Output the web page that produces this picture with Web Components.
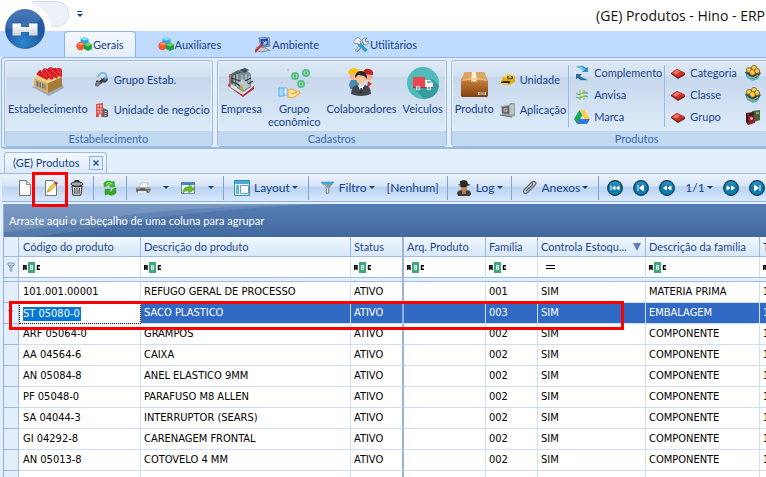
<!DOCTYPE html>
<html lang="pt-BR">
<head>
<meta charset="utf-8">
<title>(GE) Produtos - Hino - ERP</title>
<style>
html, body { margin: 0; height: 100%; }
body { overflow: hidden; background: #e3efff; color: #15428b; font: 11px/14px Lato, "Noto Sans", sans-serif; }
</style>
</head>
<body>
<erp-window></erp-window>

<script>
const ICONS = {
logo: ['0 0 54 54', `<defs><radialGradient id="g" cx=".45" cy=".85" r=".9"><stop offset="0" stop-color="#2f86cf"/><stop offset=".6" stop-color="#1d559f"/><stop offset="1" stop-color="#2e69b4"/></radialGradient><linearGradient id="h" x1="0" y1="0" x2="0" y2="1"><stop offset="0" stop-color="#fff"/><stop offset="1" stop-color="#cfd3d8"/></linearGradient></defs><circle cx="27" cy="27" r="26" fill="#fff"/><path d="M0 29h54a27 27 0 0 1-54 0z" fill="#bfdbff"/><circle cx="27" cy="27" r="19.5" fill="url(#g)" stroke="#173f80" stroke-width=".6"/><path d="M10 14q17-13 34 0-4 12-38 13 0-8 4-13z" fill="#fff" opacity=".13"/><path d="M14.5 21.5h8.5v3.500h8v-3.500h8.500v12h-8.500v-3.500h-8v3.500h-8.500z" fill="url(#h)"/>`],
cubes: ['0 0 16 16', `<path d="M8.300 0 12.500 2v4.500L8.500 8.500 4.500 6.500V2z" fill="#27aee6"/><path d="M4.500 2 8.500 3.500 12.500 2 8.300 0z" fill="#8ddcf8"/><circle cx="4.500" cy="9" r="4.200" fill="#f0592a"/><path d="M1.500 7 4.500 5.500 8 7 4.500 8.500z" fill="#ff9d78"/><path d="M12.200 5.500 16 7.500v4.500l-4 2-4-2V7.500z" fill="#21a043"/><path d="m8 7.500 4-2 4 2-4 2z" fill="#6fd06a"/>`],
ambient: ['0 0 16 16', `<path d="M4 1 14 0l1 9-9 1z" fill="#d9dce3" stroke="#444c60" stroke-width=".7"/><path d="m5.200 2 7.800-.8.700 7-7.500.700z" fill="#1950bd"/><path d="m8 4 3 3m0-3v3H8" stroke="#fff" fill="none"/><path d="m2 10 7 .500 6 3-9 1.500L0 13z" fill="#c6c8cf" stroke="#585d69" stroke-width=".6"/><path d="m7 7-7 8" stroke="#ca3034" stroke-width="2"/>`],
tools: ['0 0 16 16', `<path d="M3 14.500 12.500 4" stroke="#5d7f9b" stroke-width="3.200"/><path d="M3 14 12 4.500" stroke="#dce9f3" stroke-width="1.600"/><path d="M9 3q2-3 5-2l-2 2 1 2 3-1q0 4-5 4z" fill="#dce6ed" stroke="#5d7183" stroke-width=".7"/><path d="m5.500 6.500 8 7.500" stroke="#27a0cf" stroke-width="3.300"/><path d="M0 4.500 4.500 0 9 3.500 7 4.500 8 6 6 8 4.500 6 2 7z" fill="#e6edf2" stroke="#687b89" stroke-width=".7"/>`],
store: ['0 0 32 32', `<path d="m0 20 17 9 15-8-3-8z" fill="#8a96a0" opacity=".7"/><path d="m2 11 14 5v10L2 19z" fill="#d8ae68"/><path d="m16 16 14-6v9l-14 7z" fill="#a67b34"/><path d="M2 11 8 8l20-2 2 4-14 6z" fill="#f1cd86"/><path d="m4.500 14 9 3.500v5L4.500 19z" fill="#64716b"/><path d="m7 15v5m2.500-4v5m2.500-4v5" stroke="#e2c899" stroke-width=".8"/><path d="M5 8q-1-2 3-5l2 1 2-3 3 1 3-2 3 1 6 0q3 0 3 3v6l-4-1-1 3-3-2-2 3-3-2-2 2-4-2-2-1z" fill="#d81f26"/><path d="m9 4 6 6m-2-8 7 8m-2-9 8 8M24 1l5 6" stroke="#f2605a" stroke-width=".8"/>`],
group: ['0 0 16 16', `<path d="m2 9 5-3 4 2-4 4-4 2z" fill="#303236"/><path d="m1 11 4-2 2 2-3 4-3-1z" fill="#777a80"/><path d="m9 6 4-1 1 3-3 3-3-1z" fill="#404349"/><path d="m3 8 3-2 2 1-3 2z" fill="#d6d7d9"/><path d="M4 5q2-5 6-4 3 1 2 5" fill="none" stroke="#7db5dd" stroke-width="1.800"/><path d="m10 6 3 0-2 3z" fill="#53a0d9"/>`],
building: ['0 0 16 16', `<path d="M2 2 9 1v14H2z" fill="#e84c45"/><path d="M9 6 14 8v7H9z" fill="#59606b"/><path d="M3.500 4h1.500m1 0h1.500m-4 3h1.500m1 0h1.500m-4 3h1.500m1 0h1.500" stroke="#fff" stroke-width="1.600"/><path d="M5 12h2v3H5z" fill="#fff"/><path d="M10.500 9.500h2m-2 2h2m-2 2h2" stroke="#c8cdd4"/>`],
company: ['0 0 32 32', `<path d="m3 19 15 11 11-8v-3L17 23 4 16z" fill="#b3303c"/><path d="m5 15 13 8 10-6v3l-10 8-13-8z" fill="#d7dfdf"/><path d="M6 7 13 3l6 3v17L6 17z" fill="#53656b"/><path d="m12 8 9-5 5 4v13l-8 5-6-4z" fill="#7b8c92"/><path d="m14 3 6-2 4 2-5 3z" fill="#3c5259"/><path d="M9 8v10m3-11v13m5-12v14m4-15v14m3-12v10" stroke="#d0dada"/><path d="m6 11 12 4 8-4M6 14l12 6 10-6" stroke="#263c46" stroke-width="1.100" fill="none"/><path d="m13 16 5-4 7 7-6 4z" fill="#bdcaca"/><path d="m15 18 3 2v4l-3-2z" fill="#c4a430"/><path d="M5 7v12" stroke="#b2484d" stroke-width="1.500"/>`],
money: ['0 0 32 32', `<g fill="#4dbf93"><circle cx="28" cy="6" r="4"/><circle cx="17" cy="9" r="4"/><circle cx="23" cy="17" r="4"/></g><g fill="#aee68b"><circle cx="28" cy="6" r="2.300"/><circle cx="17" cy="9" r="2.300"/><circle cx="23" cy="17" r="2.300"/></g><path d="M28 4.500v3m-11 0v3m6 5v3" stroke="#268767" stroke-width="1.200"/><path d="M1 21h5v8H1z" fill="#a8dcff" stroke="#55aef2"/><path d="M6 21h3v7H6z" fill="#fff" stroke="#5caee9"/><path d="m10 23 4-1 4 2-1 2-4 0 2 1 6-3 1 2-7 5-5-1z" fill="#ffe5a1" stroke="#e7a840" stroke-width="1.100"/><path d="M9 3h2m-1-1v2m-7 12h2m24 0h2M8 16h1" stroke="#f2aaa6"/>`],
people: ['0 0 32 32', `<circle cx="8" cy="9" r="4.500" fill="#f2b58d"/><path d="M2 7q0-6 6-6t7 6z" fill="#ffc113"/><path d="m3 17 2-4 8 0v9H4z" fill="#4a8bad"/><circle cx="22" cy="9" r="4.500" fill="#e9ad87"/><path d="M17 7q0-6 6-5 5 1 4 6z" fill="#c52227"/><path d="m17 14 9-1 4 5-2 6H17z" fill="#d6dbe1"/><path d="m22 14 4 3-5 4" fill="#cb3b3a"/><circle cx="15" cy="12" r="4.800" fill="#f7c29a"/><path d="M9 11q0-7 6-7t6 8l-3-3-6-1z" fill="#2c2928"/><path d="M5 27q0-8 6-9l4 4 4-4q6 1 6 9-10 4-20 0z" fill="#41464e"/><path d="m12 18 3 8 3-8-3 2z" fill="#fff"/><path d="m14.500 21h1.500v5h-2z" fill="#222"/>`],
truck: ['0 0 32 32', `<circle cx="16" cy="16" r="16" fill="#4fbcba"/><path d="m7 21 10 11q14-1 15-14l-7-6z" fill="#349da2"/><path d="M6 10h12v10H6z" fill="#ef4550"/><path d="M18 13h5l3 3v4h-8z" fill="#f3f5f5"/><path d="m20 14h3l2 2h-5z" fill="#68bdc9"/><path d="M6 20h20v1H6z" fill="#9b3b45"/><circle cx="11" cy="21" r="2.200" fill="#fff"/><circle cx="22" cy="21" r="2.200" fill="#fff"/><circle cx="11" cy="21" r="1" fill="#35656a"/><circle cx="22" cy="21" r="1" fill="#35656a"/>`],
box: ['0 0 32 32', `<defs><linearGradient id="b" x1="0" y1="0" x2="0" y2="1"><stop offset="0" stop-color="#c98a4a"/><stop offset=".4" stop-color="#bd7834"/><stop offset="1" stop-color="#804010"/></linearGradient></defs><path d="M7 5h19l4 9v15l-1 1H4l-1-1V13z" fill="url(#b)"/><path d="M7 5h19l4 9q-12-4-27 0z" fill="#dba663"/><path d="M14 5h4l1 10-2-1-1 1-2-1-1 1z" fill="#fff0d3"/><path d="M16 11q9 0 14 3-12-2-27 0 6-3 13-3z" fill="#f6c481" opacity=".75"/><path d="M20 25h8v3h-8z" fill="#e5d5bd"/><path d="M22 25v3m2-3v3m2-3v3" stroke="#6f462b"/>`],
tape: ['0 0 16 16', `<path d="M1 10 3 5l6-3 6 2v6l-5 3-9-1z" fill="#e7ac0c"/><path d="M3 5 9 2l6 2-4 4z" fill="#ffd63e"/><path d="m1 10 3-1 6 0v2l-4 1-5 0z" fill="#292722"/><ellipse cx="10" cy="5.500" rx="3.200" ry="1.800" fill="#33312c"/><ellipse cx="10" cy="5.300" rx="1.700" ry="1" fill="#f9e17c"/><path d="M0 11h8v1H0z" fill="#ffd21e"/>`],
safe: ['0 0 16 16', `<path d="m1 4 8-1 1-2h4l1 1v12l-5 1-8-2z" fill="#9b9e9f"/><path d="M2 5 9 4v8l-7-1z" fill="#61686a"/><path d="m10 3 4-1v10l-4 1z" fill="#bfc1c1"/><circle cx="5.500" cy="8" r="2.200" fill="#a9acac"/><path d="m4.500 9 2-2" stroke="#dd3935"/><path d="M0 13l12 2" stroke="#676b6d"/>`],
swap: ['0 0 16 16', `<path d="M2 2q6-3 10 1l2-1v5H8l2-2Q7 3 2 2z" fill="#2c91ba"/><path d="M14 14q-7 3-10-1l-2 1V9h6l-2 2q3 3 8 3z" fill="#236f96"/><path d="M2 2q6-2 9 2L9 6Q7 3 2 2z" fill="#6cc7e1"/><path d="M5 15.500h9" stroke="#b6c8d4"/>`],
anvisa: ['0 0 16 16', `<path d="M2 6.500q3 2 6 0t6 0M2 10q3 2 6 0t6 0" fill="none" stroke="#48b4a5" stroke-width="1.300"/><path d="M6 3v3l4 4v3M10 3v3l-4 4v3" fill="none" stroke="#b6c33b" stroke-width="1.200"/><circle cx="8" cy="8" r="1.300" fill="#f6f091"/>`],
drive: ['0 0 16 16', `<path d="M5.500 1 0 10l3 5 5.500-9z" fill="#18a560"/><path d="M5.500 1h5l5.500 9h-5.500z" fill="#ffcf42"/><path d="M5.500 10H16l-3 5H3z" fill="#3676d6"/>`],
red: ['0 0 16 16', `<path d="m1 8 6-4 8 4v2l-7 4-7-5z" fill="#812319"/><path d="m1 8 6-4 8 4-7 4z" fill="#ce352b"/><path d="m3 8 4-3 3 1.500-4 3z" fill="#ee7a69"/>`],
eggs: ['0 0 16 16', `<path d="M0 7 3 6h10l3 2-3 5-5 2-6-3z" fill="#354b60"/><path d="m1 8 4 4 6 1 4-4-2 5-5 2-6-3z" fill="#4eb2d5"/><g fill="#f8cb43" stroke="#6b4510" stroke-width=".7"><circle cx="4" cy="5" r="2.600"/><circle cx="9" cy="3" r="2.600"/><circle cx="12" cy="6" r="2.600"/><circle cx="7.500" cy="7.500" r="2.800"/></g><path d="m3 4 1-1m4-1h1m-3 4h1m4-2h1" stroke="#fff4ad"/><path d="m3 11 5 2 5-3" stroke="#dba927" fill="none"/>`],
books: ['0 0 16 16', `<path d="m7 2 8-1v10l-6 2z" fill="#49633b"/><path d="m1 4 8-1 1 11-7 2z" fill="#8c2027"/><path d="M1 4v9l2 3V6z" fill="#461518"/><path d="M4 4 9 3v3L4 7z" fill="#2a2528"/><circle cx="6.500" cy="9.500" r="1.500" fill="#e8b3a3"/><path d="M11 4h3" stroke="#d8cdb9"/>`],
page: ['0 0 16 16', `<path d="M2.500.5h7l4 4v11h-11z" fill="#fbfbfc" stroke="#777"/><path d="M9.500.5v4h4" fill="#e3e4e5" stroke="#888"/>`],
edit: ['0 0 16 16', `<path d="M2.500.5h8l3 3v12h-11z" fill="#fbfbfc" stroke="#777"/><path d="m4.500 12 1-3 6-6.500 2 2-6.500 6.500z" fill="#f8cc28" stroke="#bd951b" stroke-width=".6"/><path d="m4 12.500 1-3 2 2z" fill="#ed944d"/><path d="m11 3 2-1.500 2 2-2 1.500z" fill="#b71d72"/>`],
trash: ['0 0 16 16', `<path d="M5.500 2q2.500-3 5 0" fill="none" stroke="#222" stroke-width="1.400"/><ellipse cx="8" cy="4" rx="6" ry="2.200" fill="#aaa" stroke="#222"/><path d="m3 6 1 9q4 1.500 8 0l1-9q-5 2-10 0z" fill="#ddd" stroke="#333"/><path d="m5.500 8 .5 6m2-6v6m2.500-6-.5 6" stroke="#444" stroke-width="1.100"/>`],
refresh: ['0 0 16 16', `<path d="M2 7V3q4-4 8-1l2-1 1 6H7l2-2Q6 3 5 6z" fill="#3fba25" stroke="#238414" stroke-width=".4"/><path d="M14 8v5q-4 4-8 1l-3 1V9h6l-2 2q3 2 4-2z" fill="#35a91e" stroke="#238414" stroke-width=".4"/><path d="M4 4q3-3 6 0" stroke="#a4ed7f" fill="none"/>`],
printer: ['0 0 16 16', `<path d="m6 3 7 0-1 6H4z" fill="#fafafa" stroke="#aaa" stroke-width=".6"/><path d="m1 8 2-1h11l2 2-2 4-11 0-2-2z" fill="#686b70"/><path d="m1 8 2-1h11l2 2H2z" fill="#a7aaac"/><path d="m3 11 8 0 1 2H3z" fill="#e9e7de"/><path d="M5 9h5" stroke="#333"/><path d="M13 11h1" stroke="#b5d443"/>`],
exporter: ['0 0 16 16', `<path d="M1.500 2.500h13v11h-13z" fill="#fff" stroke="#6b8caf"/><path d="M1 2h14v3H1z" fill="#4985b8"/><path d="M3 13q0-7 6-6V5l6 4-6 4v-2q-4-1-6 2z" fill="#67bb2c" stroke="#348b17" stroke-width=".6"/>`],
layout: ['0 0 16 16', `<path d="M.5.500h15v15H.5z" fill="#e9f8ff" stroke="#298fb6"/><path d="M1 1h14v3H1z" fill="#4da8cc"/><path d="M2 5h3v9H2z" fill="#65b7d4"/><path d="M6.500 5.500h8v8h-8z" fill="#f8fcff" stroke="#7699b9"/>`],
filter: ['0 0 16 16', `<path d="m2 2 5 6v6l3-1V8l5-6z" fill="#969ba1" stroke="#777" stroke-width=".5"/><path d="M2 2h13l-2 2H4z" fill="#31abe0"/><path d="m5 5 3.500 4v4" stroke="#e5e7e9" fill="none"/>`],
spy: ['0 0 16 16', `<path d="M1 13q1-3 5-3h4q5 0 5 4l-1 2H2z" fill="#3b3d42"/><path d="M5 5h6v5l-3 3-3-3z" fill="#c6835b"/><path d="m4 1 4-1 3 1 1 3 3 1q-7 2-13 0l2-1z" fill="#28292b"/><path d="M4 6h7v1H4z" fill="#111"/><path d="m6 10 2 3 2-3 0 4H6z" fill="#b87534"/>`],
clip: ['0 0 16 16', `<path d="m3 9 7-7q2-1.500 3 0 2 1 0 3l-8 8q-1.500 1-3 0-1-2 0-3l7-7q1-.5 1.500.5T10 5l-6 6" fill="none" stroke="#686b72" stroke-width="1.400"/>`],
first: ['0 0 16 16', `<path d="M4 5.500v5M8 6 5.500 8 8 10zM12 6 9.500 8l2.500 2z" fill="#fff" stroke="#fff"/>`],
prev: ['0 0 16 16', `<path d="M5 5v6M10.500 5.200 6.500 8l4 2.800z" fill="#fff" stroke="#fff"/>`],
rewind: ['0 0 16 16', `<path d="M7.500 6 4.500 8l3 2zM12 6 9 8l3 2z" fill="#fff" stroke="#fff"/>`],
forward: ['0 0 16 16', `<path d="M8.500 6l3 2-3 2zM4 6l3 2-3 2z" fill="#fff" stroke="#fff"/>`],
next: ['0 0 16 16', `<path d="M11 5v6M5.500 5.200l4 2.800-4 2.800z" fill="#fff" stroke="#fff"/>`],
funnel: ['0 0 16 16', `<path d="M4.500 3.500h7v2L9 8.500v4H7v-4L4.500 5.500zM5 6h6M6 8h4" fill="none" stroke="#6389bd"/>`],
edrow: ['0 0 16 16', `<path d="M5 6q1-3 3-2t1 3L6 11m0 2h3" fill="none" stroke="#35588d"/>`],
abc: ['0 0 18 11', `<path d="M5 0h7v11H5z" fill="#3fa77c"/><path d="M.7 8V3.700h2.300V8M1 6h2M17 3.700h-2.500v3.600H17" fill="none" stroke="#000" stroke-width="1.400"/><path d="M7.500 3.500h2v4h-2zM7.500 5.500h2" fill="none" stroke="#e8fff4"/>`],
close: ['0 0 14 14', `<path d="M.5.500h13v13H.5z" fill="#dfecfc" stroke="#8db2e3"/><path d="m4.500 4.500 5 5m0-5-5 5" stroke="#24569f" stroke-width="1.500"/>`]
};
for (const n of ['first','prev','rewind','forward','next'])
  ICONS[n][1] = `<defs><linearGradient id="n" x1="0" y1="0" x2="0" y2="1"><stop offset="0" stop-color="#2f9cc8"/><stop offset=".5" stop-color="#0d74aa"/><stop offset="1" stop-color="#1185b6"/></linearGradient></defs><circle cx="8" cy="8" r="7.400" fill="url(#n)" stroke="#0c3550" stroke-width="1.100"/>` + ICONS[n][1];

function define(name, css, html) {
  customElements.define(name, class extends HTMLElement {
    connectedCallback() {
      if (this.shadowRoot) return;
      const root = this.attachShadow({ mode: 'open' });
      root.innerHTML = `<style>*{box-sizing:border-box}${css}</style>` + (typeof html === 'function' ? html(this) : html);
    }
  });
}
const attr = (el, n, d = '') => el.getAttribute(n) ?? d;

define('app-icon', `:host{display:block;flex:none;width:var(--icon-w,16px);height:var(--icon-h,16px)} svg{display:block;width:100%;height:100%}`,
  el => { const [box, body] = ICONS[attr(el, 'name')]; return `<svg viewBox="${box}" aria-hidden="true">${body}</svg>`; });

define('title-bar', `
  :host{display:flex;align-items:center;height:31px;background:#fff;position:relative;color:#111}
  .quick{width:37px;height:26px;margin:-4px 0 0 32px;border:1px solid #d3deed;border-left:0;border-radius:0 14px 14px 0;background:#edf2fa}
  button{all:unset;width:5px;height:5px;margin:-3px 0 0 8px;border-top:1px solid #15428b;display:flex;align-items:flex-end;justify-content:center}
  i{border:3px solid transparent;border-top-color:#15428b;border-bottom:0}
  h1{margin:0 1px 0 auto;font:14px/20px "Open Sans","Noto Sans",sans-serif;white-space:nowrap}
  app-icon{position:absolute;left:-2px;top:2px;z-index:2;--icon-w:54px;--icon-h:54px}`,
  `<app-icon name="logo"></app-icon><div class="quick"></div><button aria-label="Personalizar"><i></i></button><h1><slot></slot></h1>`);

define('ribbon-tab', `
  :host{display:flex}
  button{all:unset;box-sizing:border-box;display:flex;align-items:center;gap:1px;height:27px;padding:0 12px;white-space:nowrap}
  :host([active]) button{background:linear-gradient(#f4f8fd,#e4edf8);border:1px solid #8db2e3;border-bottom:0;border-radius:4px 4px 0 0;padding:0 11px}`,
  el => `<button role="tab" aria-selected="${el.hasAttribute('active')}"><app-icon name="${attr(el,'icon')}"></app-icon><slot></slot></button>`);

define('ribbon-tabs', `:host{display:flex;height:26px;padding-left:64px;background:#bfdbff} div{display:flex;gap:10px}`, `<div role="tablist"><slot></slot></div>`);

define('ribbon-body', `:host{display:flex;gap:4px;padding:2px 0 0 2px;margin:0 0 0 1px;border:1px solid #8db2e3;border-right:0;border-bottom:2px solid #9bb8de;border-radius:4px 0 0 4px;background:linear-gradient(#e4edf8,#e6f1fb);overflow:hidden}`, `<slot></slot>`);

define('ribbon-group', `
  :host{display:flex;flex:none;flex-direction:column;height:87px;border:1px solid #9bbbe0;border-radius:3px;background:linear-gradient(#dde9f5 0,#d3e1f1 15px,#c7d8ed 16px,#dcebf8 70px);overflow:hidden;box-shadow:inset 0 0 0 1px #e9f2fb}
  .items{flex:1;display:flex;min-height:0}
  .cap{height:15px;line-height:15px;text-align:center;background:#c1d8f1;color:#3e6aaa}`,
  el => `<div class="items"><slot></slot></div><div class="cap">${attr(el,'label')}</div>`);

define('ribbon-column', `:host{display:flex;flex-direction:column;justify-content:center;padding:0 2px 2px 3px;gap:14px} :host([three]){justify-content:center;gap:6px;border-left:1px solid #9bbbe0;margin:4px 0;padding:0 2px 2px 5px} :host([plain]){border-left-color:transparent}`, `<slot></slot>`);

define('ribbon-item', `
  :host{display:block}
  button{all:unset;display:flex;align-items:center;gap:4px;height:16px;white-space:nowrap}
  :host([large]) button{flex-direction:column;gap:3px;height:auto;padding:6px 3px 0;text-align:center;line-height:13px}
  :host([large]) app-icon{--icon-w:32px;--icon-h:32px}`,
  el => `<button aria-label="${attr(el,'aria', el.textContent.trim())}"><app-icon name="${attr(el,'icon')}"></app-icon><span><slot></slot></span></button>`);

define('doc-tab', `
  :host{display:flex;padding:4px 0 0 4px;border-bottom:1px solid #9dbbe4;height:25px;align-items:flex-end;background:#e3efff;box-sizing:border-box}
  div{display:flex;align-items:center;gap:9px;height:21px;padding:0 3px 0 8px;border:1px solid #9dbbe4;border-bottom:0;border-radius:3px 3px 0 0;background:linear-gradient(#f4f9ff,#dce9fa)}
  button{all:unset} app-icon{--icon-w:14px;--icon-h:14px}`,
  `<div><span><slot></slot></span><button aria-label="Fechar"><app-icon name="close"></app-icon></button></div>`);

define('tool-bar', `
  :host{display:flex;align-items:center;box-sizing:border-box;height:28px;margin-left:2px;padding-left:5px;border-bottom:1px solid #8db2e3;background:linear-gradient(#edf3fa 0,#d5e4f6 12px,#b9d3f2 13px,#d8e8fb 100%)}
  .grip{width:2px;height:14px;margin-right:5px;background:repeating-linear-gradient(#7f9fce 0 2px,transparent 2px 4px)}`, `<div class="grip"></div><slot></slot>`);

define('tool-sep', `:host{display:block;flex:none;width:1px;height:24px;margin:0 3px;background:#7fa3d4}`, ``);

define('tool-button', `
  :host{display:block;position:relative;flex:none}
  button{all:unset;display:flex;align-items:center;gap:4px;height:24px;padding:0 5px;font-size:12px;white-space:nowrap}
  :host([wide]) button{padding:0 7px}
  :host([drop]) button::after{content:"";border:3px solid transparent;border-top-color:#15428b;border-bottom:0;margin-left:-2px}
  :host([drop][bare]) button{padding:0 6px 0 9px}
  :host([marked])::after{content:"";position:absolute;left:-6px;top:-4px;width:36px;height:35px;box-sizing:border-box;border:3px solid #f00;z-index:3}`,
  el => `<button aria-label="${attr(el,'aria', el.textContent.trim())}">${attr(el,'icon') ? `<app-icon name="${attr(el,'icon')}"></app-icon>` : ''}${el.textContent.trim() ? '<span><slot></slot></span>' : ''}</button>`);

define('group-panel', `
  :host{display:grid;align-items:center;height:33px;color:#fff}
  svg,span{grid-area:1/1} svg{width:100%;height:33px} span{padding-left:5px}`,
  `<svg viewBox="0 0 762 33" preserveAspectRatio="none" aria-hidden="true"><defs><linearGradient id="p" x1="0" y1="0" x2="0" y2="1"><stop offset="0" stop-color="#557db4"/><stop offset="1" stop-color="#426a9f"/></linearGradient></defs><path d="M0 0h762v33H0z" fill="url(#p)"/><path d="M0 0h325Q200 5 125 18T30 33H0z" fill="#fff" opacity=".1"/><path d="M0 0h325Q180 2 95 15T0 28z" fill="#fff" opacity=".13"/></svg><span><slot></slot></span>`);

const COLS = [['Código do produto',122],['Descrição do produto',210],['Status',53],['Arq. Produto',82],['Família',52],['Controla Estoqu...',108],['Descrição da família',114],['Tipo',60]];
const ROWS = [
  ['101.001.00001','REFUGO GERAL DE PROCESSO','001','MATERIA PRIMA'],
  ['ST 05080-0','SACO PLASTICO','003','EMBALAGEM'],
  ['ARF 05064-0','GRAMPOS','002','COMPONENTE'],
  ['AA 04564-6','CAIXA','002','COMPONENTE'],
  ['AN 05084-8','ANEL ELASTICO 9MM','002','COMPONENTE'],
  ['PF 05048-0','PARAFUSO M8 ALLEN','002','COMPONENTE'],
  ['SA 04044-3','INTERRUPTOR (SEARS)','002','COMPONENTE'],
  ['GI 04292-8','CARENAGEM FRONTAL','002','COMPONENTE'],
  ['AN 05013-8','COTOVELO 4 MM','002','COMPONENTE'],
  ['','','','']
];
define('product-grid', `
  :host{display:block;color:#000;background:#fff}
  table{table-layout:fixed;width:816px;min-width:100%;border-spacing:0}
  th,td{padding:0 0 0 3px;height:21px;border-right:1px solid #cfe0f5;border-bottom:1px solid #cfe0f5;text-align:left;white-space:nowrap;overflow:hidden}
  tbody td{font-family:"DejaVu Sans Condensed","DejaVu Sans",sans-serif}
  tr>:nth-child(2){padding-left:4px}
  thead th{height:20px;font-weight:400;color:#1e4690;background:linear-gradient(#f2f8ff,#d7e7fa);border-color:#9dbbe4}
  thead tr.filter td{border-bottom-color:#9dbbe4}
  tr.gap td{height:4px;padding:0;background:#e3efff;border-bottom-color:#9dbbe4}
  th:first-child,td:first-child{padding:0;background:#e3effd;border-color:#9dbbe4;overflow:visible}
  tr>:nth-child(4){border-right:2px solid #9ab3d6}
  .sorted{display:flex;justify-content:space-between;align-items:center;padding-right:4px}
  .sorted i{border:4px solid transparent;border-top:8px solid #5b80b7;border-bottom:0}
  .abc{--icon-w:18px;--icon-h:11px}
  .eq{display:block;width:9px;height:4px;margin-left:5px;border:solid #000;border-width:1px 0}
  tr.on td{background:#316ac5;color:#fff}
  tr.on td:first-child{position:relative;background:#e3effd}
  tr.on td:nth-child(2){background:#fff;border:1px dotted #000;padding-left:3px}
  input{all:unset;display:block;width:58px;height:14px;font:inherit;background:#0078d7;color:#fff}
  .mark{position:absolute;left:5px;top:-2px;width:615px;height:29px;border:3px solid #f00;z-index:2;pointer-events:none}`,
  () => `<table><colgroup><col style="width:15px">${COLS.map(c => `<col style="width:${c[1]}px">`).join('')}</colgroup>
  <thead><tr><th aria-label="Indicador"></th>${COLS.map((c,i) => `<th scope="col">${i === 5 ? `<div class="sorted">${c[0]}<i></i></div>` : c[0]}</th>`).join('')}</tr>
  <tr class="filter"><td><app-icon name="funnel" style="--icon-w:14px"></app-icon></td>${COLS.map((c,i) => `<td>${i === 5 ? '<span class="eq"></span>' : '<app-icon class="abc" name="abc"></app-icon>'}</td>`).join('')}</tr>
  <tr class="gap">${'<td></td>'.repeat(9)}</tr></thead>
  <tbody>${ROWS.map((r,i) => { const f = r[0] !== ''; const on = i === 1;
    return `<tr${on ? ' class="on"' : ''}><td>${on ? '<app-icon name="edrow" style="--icon-w:14px"></app-icon><div class="mark"></div>' : ''}</td><td>${on ? `<input aria-label="Código do produto" value="${r[0]}">` : r[0]}</td><td>${r[1]}</td><td>${f ? 'ATIVO' : ''}</td><td></td><td>${r[2]}</td><td>${f ? 'SIM' : ''}</td><td>${r[3]}</td><td>${f ? '1' : ''}</td></tr>`; }).join('')}</tbody></table>`);

define('erp-window', `
  :host{display:flex;flex-direction:column;min-height:100vh;overflow:hidden}
  .doc{margin:2px 0 0 3px;border-left:1px solid #8db2e3;flex:1}`, `
  <title-bar>(GE) Produtos - Hino - ERP</title-bar>
  <ribbon-tabs>
    <ribbon-tab icon="cubes" active>Gerais</ribbon-tab><ribbon-tab icon="cubes">Auxiliares</ribbon-tab><ribbon-tab icon="ambient">Ambiente</ribbon-tab><ribbon-tab icon="tools">Utilitários</ribbon-tab>
  </ribbon-tabs>
  <ribbon-body>
    <ribbon-group label="Estabelecimento">
      <ribbon-item large icon="store">Estabelecimento</ribbon-item>
      <ribbon-column><ribbon-item icon="group">Grupo Estab.</ribbon-item><ribbon-item icon="building">Unidade de negócio</ribbon-item></ribbon-column>
    </ribbon-group>
    <ribbon-group label="Cadastros">
      <ribbon-item large icon="company">Empresa</ribbon-item><ribbon-item large icon="money">Grupo<br>econômico</ribbon-item><ribbon-item large icon="people">Colaboradores</ribbon-item><ribbon-item large icon="truck">Veiculos</ribbon-item>
    </ribbon-group>
    <ribbon-group label="Produtos" style="min-width:372px">
      <ribbon-item large icon="box">Produto</ribbon-item>
      <ribbon-column><ribbon-item icon="tape">Unidade</ribbon-item><ribbon-item icon="safe">Aplicação</ribbon-item></ribbon-column>
      <ribbon-column three><ribbon-item icon="swap">Complemento</ribbon-item><ribbon-item icon="anvisa">Anvisa</ribbon-item><ribbon-item icon="drive">Marca</ribbon-item></ribbon-column>
      <ribbon-column three><ribbon-item icon="red">Categoria</ribbon-item><ribbon-item icon="red">Classe</ribbon-item><ribbon-item icon="red">Grupo</ribbon-item></ribbon-column>
      <ribbon-column three plain><ribbon-item icon="eggs" aria="Lote"></ribbon-item><ribbon-item icon="eggs" aria="Itens"></ribbon-item><ribbon-item icon="books" aria="Catálogo"></ribbon-item></ribbon-column>
    </ribbon-group>
  </ribbon-body>
  <doc-tab>(GE) Produtos</doc-tab>
  <tool-bar>
    <tool-button icon="page" aria="Novo"></tool-button><tool-button icon="edit" aria="Editar" marked></tool-button><tool-button icon="trash" aria="Excluir"></tool-button>
    <tool-sep></tool-sep><tool-button icon="refresh" aria="Atualizar"></tool-button><tool-sep></tool-sep>
    <tool-button icon="printer" aria="Imprimir"></tool-button><tool-button drop bare aria="Opções de impressão"></tool-button>
    <tool-button icon="exporter" aria="Exportar"></tool-button><tool-button drop bare aria="Opções de exportação"></tool-button>
    <tool-sep></tool-sep><tool-button wide drop icon="layout">Layout</tool-button>
    <tool-sep></tool-sep><tool-button wide drop icon="filter">Filtro</tool-button><tool-button>[Nenhum]</tool-button>
    <tool-sep></tool-sep><tool-button drop icon="spy">Log</tool-button>
    <tool-sep></tool-sep><tool-button wide drop icon="clip">Anexos</tool-button>
    <tool-sep></tool-sep><tool-button icon="first" aria="Primeiro"></tool-button><tool-button icon="prev" aria="Anterior"></tool-button><tool-button icon="rewind" aria="Página anterior"></tool-button>
    <tool-button drop>1/1</tool-button><tool-button icon="forward" aria="Próxima página"></tool-button><tool-button icon="next" aria="Próximo"></tool-button>
  </tool-bar>
  <div class="doc"><group-panel>Arraste aqui o cabeçalho de uma coluna para agrupar</group-panel><product-grid></product-grid></div>`);
</script>
</body>
</html>
